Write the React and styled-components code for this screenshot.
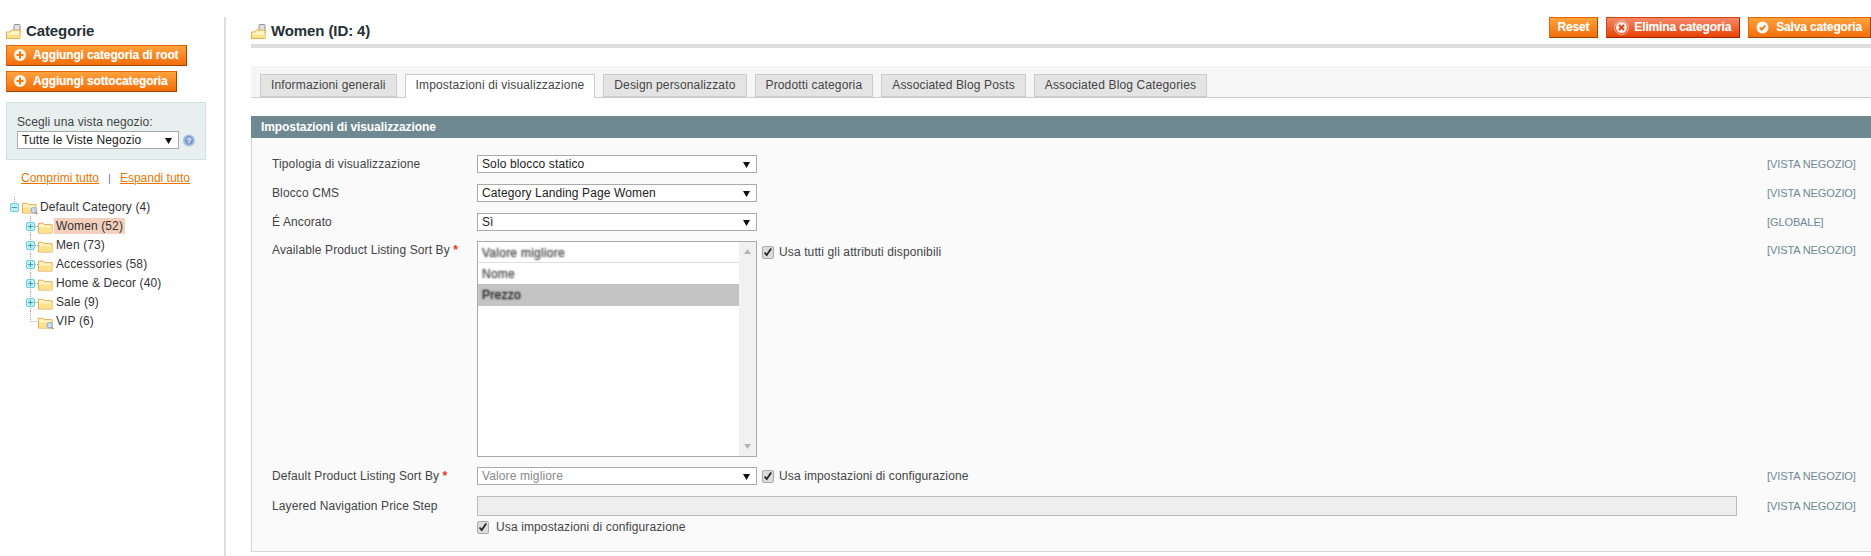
import React from "react";
import styled, { createGlobalStyle, css } from "styled-components";

const GlobalStyle = createGlobalStyle`
  html, body {
    margin: 0;
    height: 100%;
    overflow: hidden;
    background: #fff;
  }
  body {
    font: 12px/14px "Liberation Sans", Arial, sans-serif;
    letter-spacing: 0.12px;
    color: #2f2f2f;
  }
`;

const FolderIcon = ({ tag, lens }) => (
  <FolderSvg viewBox="0 0 16 16" width="15" height="15">
    {tag && <rect x="8.500" y="0.500" width="6.500" height="9" rx="1" fill="#e2e2e2" stroke="#8c8c8c" />}
    <path d={tag ? "M0.500 8.500h4l1-2h9.500v9H0.500z" : "M0.500 4.500h5l1 1.500h8.500v9H0.500z"} fill="#fff4c4" stroke="#e0a548" />
    <path d={tag ? "M1 11.500h14v3.500H1z" : "M1 9h14v5.500H1z"} fill="#fce28c" />
    {lens && (
      <g>
        <circle cx="12.500" cy="12" r="3" fill="#c9dcf2" stroke="#86a4c9" />
        <path d="M14.700 14.300l1.800 1.800" stroke="#b5763a" strokeWidth="1.400" />
      </g>
    )}
  </FolderSvg>
);

const PlusIcon = () => (
  <svg width="12" height="12" viewBox="0 0 12 12">
    <circle cx="6" cy="6" r="6" fill="#fff" fillOpacity="0.92" />
    <path d="M6 2.500v7M2.500 6h7" stroke="#f07a12" strokeWidth="2" />
  </svg>
);

const DeleteIcon = () => (
  <svg width="15" height="15" viewBox="0 0 15 15">
    <circle cx="7.500" cy="7.500" r="7" fill="none" stroke="#fbd0c0" strokeWidth="0.800" />
    <circle cx="7.500" cy="7.500" r="5.500" fill="#fff" fillOpacity="0.9" />
    <path d="M5 5l5 5M10 5l-5 5" stroke="#d9481c" strokeWidth="2" />
  </svg>
);

const CheckIcon = () => (
  <svg width="13" height="13" viewBox="0 0 13 13">
    <circle cx="6.500" cy="6.500" r="6" fill="#fff" fillOpacity="0.95" />
    <path d="M3.800 6.600l2 2 3.400-4" fill="none" stroke="#f07a12" strokeWidth="1.800" />
  </svg>
);

const HelpIcon = () => (
  <svg width="15" height="15" viewBox="0 0 15 15">
    <circle cx="7.500" cy="7.500" r="7.500" fill="#a9c0dd" />
    <circle cx="7.500" cy="7.500" r="5.500" fill="#7f9fd0" />
    <text x="7.500" y="11" textAnchor="middle" fontSize="10" fontWeight="700" fill="#fff" fontFamily="Liberation Sans">?</text>
  </svg>
);

const toggleLines = {
  root: "M5.500 0v6",
  last: "M5.500 0v10.500M5.500 10.500H14",
  child: "M5.500 0v19M10 10.500h4",
};

const Toggle = ({ type, line }) => (
  <svg width="14" height="19" viewBox="0 0 14 19">
    <path d={toggleLines[line]} stroke="#a9a9a9" strokeDasharray="1 1" fill="none" />
    {type && (
      <g>
        <rect x="1.500" y="6.500" width="8" height="8" rx="1.500" fill="#c5eef3" stroke="#62d0df" />
        <path d={type === "plus" ? "M3 10.500h5M5.500 8v5" : "M3 10.500h5"} stroke="#3d9fb0" />
      </g>
    )}
  </svg>
);

const SelectField = ({ children, disabled }) => (
  <SelectBox $disabled={disabled}>
    <span>{children}</span>
    <svg width="7" height="7" viewBox="0 0 7 7"><path d="M0 1h7L3.500 7z" fill="#111" /></svg>
  </SelectBox>
);

const Check = ({ children, wide }) => (
  <CheckLabel $wide={wide}>
    <CheckBox>
      <svg width="10" height="10" viewBox="0 0 10 10">
        <path d="M1.500 5.500l2.200 2.500 4.500-6.500" fill="none" stroke="#222" strokeWidth="1.700" />
      </svg>
    </CheckBox>
    {children}
  </CheckLabel>
);

const tree = [
  { name: "Women (52)", active: true },
  { name: "Men (73)" },
  { name: "Accessories (58)" },
  { name: "Home & Decor (40)" },
  { name: "Sale (9)" },
];

const tabs = [
  "Informazioni generali",
  "Impostazioni di visualizzazione",
  "Design personalizzato",
  "Prodotti categoria",
  "Associated Blog Posts",
  "Associated Blog Categories",
];

export default function App() {
  return (
    <Page>
      <GlobalStyle />
      <Sidebar>
        <SideTitle><FolderIcon tag /> <span>Categorie</span></SideTitle>
        <SideButtons>
          <Button><PlusIcon />Aggiungi categoria di root</Button>
          <Button><PlusIcon />Aggiungi sottocategoria</Button>
        </SideButtons>
        <StoreBox>
          <StoreLabel>Scegli una vista negozio:</StoreLabel>
          <StoreRow>
            <SelectField>Tutte le Viste Negozio</SelectField>
            <HelpIcon />
          </StoreRow>
        </StoreBox>
        <TreeLinks>
          <a>Comprimi tutto</a>
          <Pipe>|</Pipe>
          <a>Espandi tutto</a>
        </TreeLinks>
        <Tree>
          <RootNode>
            <Toggle type="minus" line="root" />
            <FolderIcon lens />
            <NodeText>Default Category (4)</NodeText>
          </RootNode>
          {tree.map((node) => (
            <ChildNode key={node.name}>
              <Toggle type="plus" line="child" />
              <FolderIcon />
              <NodeText $active={node.active}>{node.name}</NodeText>
            </ChildNode>
          ))}
          <ChildNode>
            <Toggle line="last" />
            <FolderIcon lens />
            <NodeText>VIP (6)</NodeText>
          </ChildNode>
        </Tree>
      </Sidebar>

      <Main>
        <Header>
          <PageTitle><FolderIcon tag /> <span>Women (ID: 4)</span></PageTitle>
          <HeaderButtons>
            <Button>Reset</Button>
            <Button $danger><DeleteIcon />Elimina categoria</Button>
            <Button $wide><CheckIcon />Salva categoria</Button>
          </HeaderButtons>
        </Header>

        <TabBar>
          {tabs.map((tab, i) => (
            <Tab key={tab} $active={i === 1}>{tab}</Tab>
          ))}
        </TabBar>

        <PanelHead>Impostazioni di visualizzazione</PanelHead>
        <PanelBody>
          <Row>
            <Label>Tipologia di visualizzazione</Label>
            <Value><SelectField>Solo blocco statico</SelectField></Value>
            <Scope>[VISTA NEGOZIO]</Scope>
          </Row>
          <Row>
            <Label>Blocco CMS</Label>
            <Value><SelectField>Category Landing Page Women</SelectField></Value>
            <Scope>[VISTA NEGOZIO]</Scope>
          </Row>
          <Row $gap={10}>
            <Label>É Ancorato</Label>
            <Value><SelectField>Sì</SelectField></Value>
            <Scope>[GLOBALE]</Scope>
          </Row>
          <Row $gap={10}>
            <Label>Available Product Listing Sort By <Req>*</Req></Label>
            <Value>
              <MultiSelect>
                <Options>
                  <Option $first>Valore migliore</Option>
                  <Option>Nome</Option>
                  <Option $selected>Prezzo</Option>
                </Options>
                <ScrollTrack>
                  <svg width="7" height="5" viewBox="0 0 7 5"><path d="M0 5h7L3.500 0z" fill="#b5b5b5" /></svg>
                  <svg width="7" height="5" viewBox="0 0 7 5"><path d="M0 0h7L3.500 5z" fill="#b5b5b5" /></svg>
                </ScrollTrack>
              </MultiSelect>
              <CheckOffset>
                <Check>Usa tutti gli attributi disponibili</Check>
              </CheckOffset>
            </Value>
            <Scope>[VISTA NEGOZIO]</Scope>
          </Row>
          <Row>
            <Label>Default Product Listing Sort By <Req>*</Req></Label>
            <Value>
              <SelectField disabled>Valore migliore</SelectField>
              <Check>Usa impostazioni di configurazione</Check>
            </Value>
            <Scope>[VISTA NEGOZIO]</Scope>
          </Row>
          <Row $gap={3}>
            <Label $tall>Layered Navigation Price Step</Label>
            <Value $stack>
              <TextInput />
              <Check wide>Usa impostazioni di configurazione</Check>
            </Value>
            <Scope $tall>[VISTA NEGOZIO]</Scope>
          </Row>
        </PanelBody>
      </Main>
    </Page>
  );
}

const Page = styled.div`
  display: flex;
  width: 1871px;
  height: 539px;
  margin-top: 17px;
`;

const Sidebar = styled.aside`
  width: 218px;
  flex: none;
  padding: 5px 0 0 6px;
  border-right: 2px solid #ddd;
`;

const SideTitle = styled.h3`
  display: flex;
  align-items: center;
  gap: 5px;
  height: 18px;
  margin: 0 0 5px;
  font-size: 15px;
  font-weight: 700;
  letter-spacing: -0.1px;
  color: #253033;
`;

const FolderSvg = styled.svg`
  flex: none;
  display: block;
  overflow: visible;
`;

const SideButtons = styled.div`
  display: flex;
  flex-direction: column;
  align-items: flex-start;
  gap: 5px;
`;

const Button = styled.button`
  display: inline-flex;
  align-items: center;
  gap: ${(p) => (p.$danger ? 5 : 7)}px;
  box-sizing: border-box;
  height: 21px;
  padding: 0 8px 1px 7px;
  border: 1px solid;
  border-color: #ed6502 #a04300 #a04300 #ed6502;
  background: linear-gradient(#ffa23c, #f26d0b);
  color: #fff;
  font: 700 12px "Liberation Sans", Arial, sans-serif;
  letter-spacing: -0.15px;
  text-shadow: 0 0 1px rgba(255, 255, 255, 0.35);
  white-space: nowrap;
  ${(p) =>
    p.$danger &&
    css`
      border-color: #d24403 #a92000 #a92000 #d24403;
      background: linear-gradient(#f5896d, #e64304);
    `}
`;

const StoreBox = styled.div`
  box-sizing: border-box;
  width: 200px;
  height: 58px;
  margin-top: 10px;
  padding: 12px 10px 0;
  border: 1px solid #d0dfe0;
  background: #e7efef;
`;

const StoreLabel = styled.div`
  margin-bottom: 2px;
  color: #444;
`;

const StoreRow = styled.div`
  display: flex;
  align-items: center;
  gap: 4px;
`;

const SelectBox = styled.div`
  box-sizing: border-box;
  display: flex;
  align-items: center;
  justify-content: space-between;
  flex: none;
  width: 280px;
  height: 18px;
  padding: 0 6px 0 4px;
  border: 1px solid #aaa;
  background: #fff;
  color: ${(p) => (p.$disabled ? "#888" : "#222")};
  ${StoreRow} & {
    width: 162px;
  }
`;

const TreeLinks = styled.div`
  display: flex;
  width: 200px;
  margin-top: 11px;
  padding-left: 15px;
  box-sizing: border-box;
  color: #ea7601;
  letter-spacing: 0;
  & a { text-decoration: underline; }
`;

const Pipe = styled.span`
  margin: 0 9px;
  color: #6f6f9f;
  font-size: 11px;
`;

const Tree = styled.div`
  margin-top: 12px;
  color: #333;
`;

const RootNode = styled.div`
  display: flex;
  align-items: center;
  height: 19px;
  padding-left: 3px;
  & > svg:nth-child(2) { margin-left: -1px; }
`;

const ChildNode = styled(RootNode)`
  padding-left: 19px;
  & > svg:nth-child(2) { margin: 2px 0 0 -1px; }
`;

const NodeText = styled.span`
  margin-left: 1px;
  padding: 1px 2px;
  white-space: nowrap;
  background: ${(p) => (p.$active ? "#f5cfbe" : "transparent")};
`;

const Main = styled.main`
  flex: 1;
  min-width: 0;
  padding-left: 25px;
`;

const Header = styled.header`
  display: flex;
  justify-content: space-between;
  height: 27px;
  margin-bottom: 18px;
  border-bottom: 4px solid #ddd;
`;

const PageTitle = styled.h3`
  display: flex;
  align-items: center;
  gap: 5px;
  height: 18px;
  margin: 5px 0 0;
  font-size: 15px;
  font-weight: 700;
  letter-spacing: -0.1px;
  color: #253033;
`;

const HeaderButtons = styled.div`
  display: flex;
  gap: 8px;
  align-items: flex-start;
`;

const TabBar = styled.nav`
  display: flex;
  gap: 8px;
  height: 23px;
  margin-bottom: 18px;
  padding: 8px 0 0 9px;
  border-bottom: 1px solid #ccc;
  background: #f6f6f6;
`;

const Tab = styled.div`
  box-sizing: border-box;
  height: ${(p) => (p.$active ? 24 : 23)}px;
  padding: 0 10px;
  border: 1px solid #ccc;
  border-bottom: ${(p) => (p.$active ? "0" : "1px solid #ccc")};
  background: ${(p) => (p.$active ? "#fff" : "#e4e4e4")};
  color: #444;
  line-height: 21px;
  letter-spacing: 0.15px;
  white-space: nowrap;
`;

const PanelHead = styled.h4`
  height: 22px;
  margin: 0;
  padding-left: 10px;
  background: #6f8992;
  color: #fff;
  font-size: 12px;
  font-weight: 700;
  line-height: 23px;
  letter-spacing: -0.08px;
`;

const PanelBody = styled.div`
  box-sizing: border-box;
  height: 414px;
  padding: 17px 0 0 20px;
  border: 1px solid #d6d6d6;
  border-top: 0;
  border-right: 0;
  background: #fafafa;
`;

const Row = styled.div`
  display: flex;
  align-items: flex-start;
  margin-bottom: ${(p) => p.$gap ?? 11}px;
`;

const Label = styled.div`
  flex: none;
  width: 205px;
  color: #444;
  line-height: ${(p) => (p.$tall ? 20 : 18)}px;
`;

const Req = styled.span`
  color: #eb340a;
  font-weight: 700;
`;

const Value = styled.div`
  flex: 1;
  min-width: 0;
  display: flex;
  flex-direction: ${(p) => (p.$stack ? "column" : "row")};
  align-items: flex-start;
  gap: ${(p) => (p.$stack ? 2 : 5)}px;
  margin-right: 30px;
`;

const Scope = styled.div`
  flex: none;
  width: 104px;
  color: #6f8992;
  font-size: 11px;
  line-height: ${(p) => (p.$tall ? 20 : 18)}px;
  letter-spacing: -0.1px;
`;

const MultiSelect = styled.div`
  box-sizing: border-box;
  display: flex;
  flex: none;
  width: 280px;
  height: 216px;
  border: 1px solid #aaa;
  background: #fff;
`;

const Options = styled.div`
  flex: 1;
`;

const Option = styled.div`
  box-sizing: border-box;
  height: ${(p) => (p.$selected ? 22 : 21)}px;
  padding: 0 4px;
  line-height: 22px;
  letter-spacing: 0.25px;
  color: transparent;
  text-shadow: ${(p) =>
    p.$selected
      ? "0 0 2px #333, 0 0 2px #555"
      : "0 0 2px #666, 0 0 2px #888"};
  background: ${(p) => (p.$selected ? "#c4c4c4" : "transparent")};
  border-bottom: ${(p) => (p.$first ? "1px solid #ddd" : "0")};
`;

const ScrollTrack = styled.div`
  display: flex;
  flex: none;
  flex-direction: column;
  align-items: center;
  justify-content: space-between;
  width: 17px;
  padding: 7px 0;
  box-sizing: border-box;
  background: #f1f1f1;
`;

const CheckOffset = styled.div`
  padding-top: 2px;
`;

const CheckLabel = styled.label`
  display: flex;
  align-items: center;
  gap: ${(p) => (p.$wide ? 7 : 5)}px;
  height: 18px;
  color: #444;
  white-space: nowrap;
`;

const CheckBox = styled.span`
  box-sizing: border-box;
  display: flex;
  align-items: center;
  justify-content: center;
  width: 12px;
  height: 13px;
  border: 1px solid #aaa;
  border-radius: 2px;
  background: #dcdcdc;
`;

const TextInput = styled.div`
  box-sizing: border-box;
  width: 100%;
  height: 20px;
  border: 1px solid #bbb;
  background: #eee;
`;
